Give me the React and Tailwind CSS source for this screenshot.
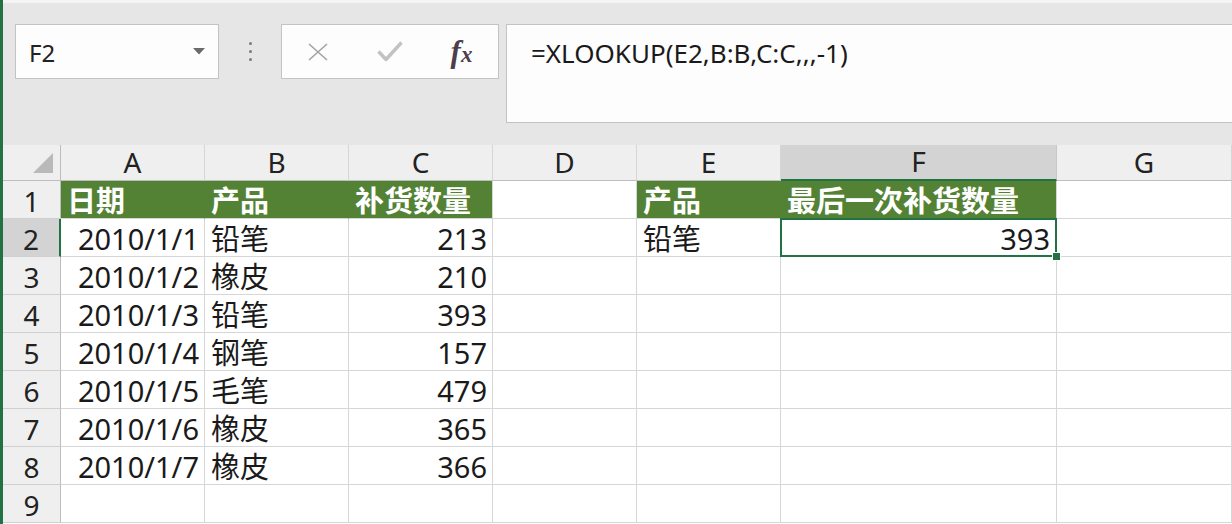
import React from "react";

const font = { fontFamily: '"Noto Sans", "Noto Sans CJK SC", sans-serif' };

const rows = [
  ["2010/1/1", "铅笔", "213"],
  ["2010/1/2", "橡皮", "210"],
  ["2010/1/3", "铅笔", "393"],
  ["2010/1/4", "钢笔", "157"],
  ["2010/1/5", "毛笔", "479"],
  ["2010/1/6", "橡皮", "365"],
  ["2010/1/7", "橡皮", "366"],
  ["", "", ""],
];

const cols = ["A", "B", "C", "D", "E", "F", "G"];

function Cell({ children, className = "" }) {
  return (
    <div className={`flex items-end whitespace-nowrap border-b border-r border-[#d6d6d6] pb-[1px] text-[29px] leading-[32px] text-[#1a1a1a] ${className}`}>
      {children}
    </div>
  );
}

function GreenCell({ children, last = false }) {
  return (
    <div className={`flex items-end whitespace-nowrap border-b border-[#d6d6d6] bg-[#548235] pb-[1px] pl-[6px] text-[29px] font-bold leading-[32px] text-white ${last ? "border-r border-r-[#d6d6d6]" : "border-r border-r-[#548235]"}`}>
      {children}
    </div>
  );
}

function RowHeader({ n, active = false }) {
  return (
    <div className={`flex items-end justify-center border-b border-[#d0d0d0] pb-[1px] text-[28px] leading-[32px] text-[#222] ${active ? "border-r-2 border-r-[#217346] bg-[#d3d3d3]" : "border-r border-r-[#bdbdbd] bg-[#efefef]"}`}>
      {n}
    </div>
  );
}

export default function App() {
  return (
    <div className="flex h-[524px] w-[1232px] overflow-hidden bg-white" style={font}>
      <div className="w-[3px] shrink-0 bg-[#217346]" />
      <div className="flex min-w-0 flex-1 flex-col">
        {/* Toolbar */}
        <div className="flex h-[145px] shrink-0 items-start border-t-[3px] border-[#f4f4f4] bg-[#e6e6e6] pl-[12px] pt-[21px]">
          <div className="flex h-[55px] w-[204px] items-center justify-between border border-[#c3c3c3] bg-[#fdfdfd] pl-[13px] pr-[13px] pt-[2px]">
            <span className="text-[24px] leading-none text-[#222]">F2</span>
            <svg width="12" height="7" viewBox="0 0 12 7" className="mb-[2px]">
              <path d="M0 0 L12 0 L6 6.5 Z" fill="#6a6a6a" />
            </svg>
          </div>
          <div className="flex h-[55px] w-[62px] flex-col items-center justify-center gap-[5px] pl-[1px]">
            <div className="h-[3px] w-[3px] rounded-full bg-[#7a7a7a]" />
            <div className="h-[3px] w-[3px] rounded-full bg-[#7a7a7a]" />
            <div className="h-[3px] w-[3px] rounded-full bg-[#7a7a7a]" />
          </div>
          <div className="flex h-[55px] w-[218px] border border-[#c3c3c3] bg-[#fdfdfd]">
            <div className="flex w-[72px] items-center justify-center">
              <svg width="20" height="18" viewBox="0 0 20 18">
                <path d="M1 1 L19 17 M19 1 L1 17" stroke="#a3a3a3" strokeWidth="1.6" fill="none" />
              </svg>
            </div>
            <div className="flex w-[72px] items-center justify-center">
              <svg width="26" height="21" viewBox="0 0 26 21">
                <path d="M1.5 10.5 L9 18.5 L24.5 1.5" stroke="#c2c2c2" strokeWidth="3.4" fill="none" strokeLinejoin="round" />
              </svg>
            </div>
            <div className="flex w-[72px] items-center justify-center pr-[1px]">
              <span className="font-bold italic leading-none text-[#4d3d4d]" style={{ fontFamily: '"Liberation Serif", serif' }}>
                <span className="text-[31px]">f</span>
                <span className="text-[23px]">x</span>
              </span>
            </div>
          </div>
          <div className="ml-[7px] h-[99px] flex-1 border border-r-0 border-[#c3c3c3] bg-[#fdfdfd] pl-[24px] pt-[15px]">
            <span className="text-[26px] leading-none text-[#1a1a1a]">=XLOOKUP(E2,B:B,C:C,,,-1)</span>
          </div>
        </div>

        {/* Sheet */}
        <div className="grid flex-1 grid-cols-[58px_144px_144px_144px_144px_144px_276px_1fr] grid-rows-[36px_repeat(9,38px)]">
          {/* header row */}
          <div className="relative border-b border-r border-[#bdbdbd] bg-[#efefef]">
            <svg width="20" height="20" viewBox="0 0 20 20" className="absolute left-[30px] top-[8px]">
              <path d="M20 0 L20 20 L0 20 Z" fill="#b9b9b9" />
            </svg>
          </div>
          {cols.map((c) => (
            <div
              key={c}
              className={`flex items-end justify-center pb-[2px] text-[28px] leading-[32px] text-[#222] ${
                c === "F"
                  ? "border-b-2 border-r border-b-[#217346] border-r-[#c8c8c8] bg-[#d3d3d3]"
                  : "border-b border-r border-b-[#bdbdbd] border-r-[#d6d6d6] bg-[#efefef]"
              }`}
            >
              {c}
            </div>
          ))}

          {/* row 1 */}
          <RowHeader n={1} />
          <GreenCell>日期</GreenCell>
          <GreenCell>产品</GreenCell>
          <GreenCell last>补货数量</GreenCell>
          <Cell />
          <GreenCell>产品</GreenCell>
          <GreenCell last>最后一次补货数量</GreenCell>
          <Cell />

          {rows.map((r, i) => {
            const n = i + 2;
            return (
              <React.Fragment key={n}>
                <RowHeader n={n} active={n === 2} />
                <Cell className="justify-end pr-[5px]">{r[0]}</Cell>
                <Cell className="pl-[6px]">{r[1]}</Cell>
                <Cell className="justify-end pr-[5px]">{r[2]}</Cell>
                <Cell />
                <Cell className="pl-[6px]">{n === 2 ? "铅笔" : ""}</Cell>
                {n === 2 ? (
                  <div className="relative flex items-end justify-end border-b border-r border-[#d6d6d6] pb-[1px] pr-[6px] text-[29px] leading-[32px] text-[#1a1a1a]">
                    <div className="absolute -left-[1px] -top-[1px] bottom-[-1px] right-[-1px] border-2 border-[#217346]" />
                    <span className="relative">393</span>
                    <div className="absolute -bottom-[5px] -right-[5px] h-[9px] w-[9px] border border-white bg-[#217346]" />
                  </div>
                ) : (
                  <Cell />
                )}
                <Cell />
              </React.Fragment>
            );
          })}
        </div>
      </div>
    </div>
  );
}
